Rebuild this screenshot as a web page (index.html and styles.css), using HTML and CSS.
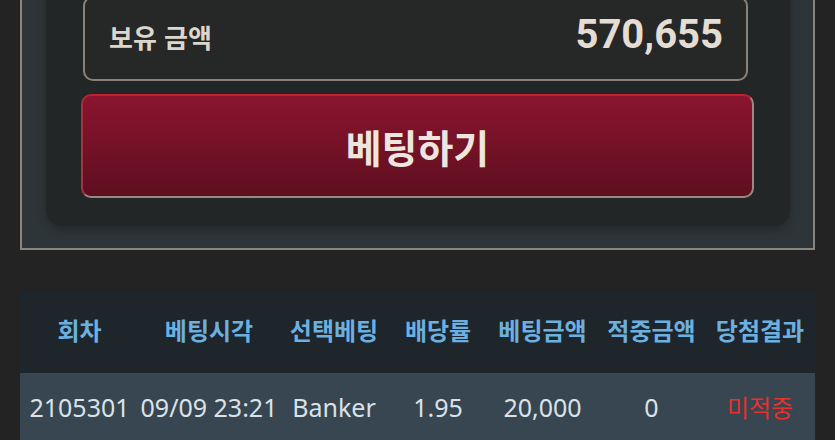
FILE: index.html
```html
<!doctype html>
<html lang="ko">
  <head>
    <meta charset="UTF-8" />
    <meta name="viewport" content="width=device-width, initial-scale=1.0" />
    <title>베팅</title>
    <link rel="stylesheet" href="styles.css">
  </head>
  <body>
    <div class="wrap">
      <div class="bet-panel">
        <div class="bet-card">
          <div class="balance">
            <span class="balance-label">보유 금액</span>
            <span class="balance-value">570,655</span>
          </div>
          <button class="bet-btn">베팅하기</button>
        </div>
      </div>

      <table class="history">
        <colgroup>
          <col class="c-round" />
          <col class="c-time" />
          <col class="c-pick" />
          <col class="c-odds" />
          <col class="c-amount" />
          <col class="c-win" />
          <col class="c-result" />
        </colgroup>
        <thead>
          <tr>
            <th>회차</th>
            <th>베팅시각</th>
            <th>선택베팅</th>
            <th>배당률</th>
            <th>베팅금액</th>
            <th>적중금액</th>
            <th>당첨결과</th>
          </tr>
        </thead>
        <tbody>
          <tr>
            <td>2105301</td>
            <td>09/09 23:21</td>
            <td>Banker</td>
            <td>1.95</td>
            <td>20,000</td>
            <td>0</td>
            <td class="lose">미적중</td>
          </tr>
        </tbody>
      </table>
    </div>
  </body>
</html>
```

FILE: styles.css
```css
body {
  margin: 0;
  background-color: #232323;
  font-family: "Noto Sans", "Noto Sans CJK KR", sans-serif;
  overflow: hidden;
}

.wrap {
  margin-top: -40px;
  padding: 0 20px;
}

.bet-panel {
  background-color: #2e3538;
  border: 2px solid #8a857e;
  padding: 0 23px 22px 24px;
}

.bet-card {
  background-color: #222626;
  border-radius: 0 0 16px 16px;
  box-shadow: 0 4px 10px rgba(0, 0, 0, 0.25);
  padding: 34px 36px 28px 35px;
}

.balance {
  height: 81px;
  margin: 0 6px 0 2px;
  padding: 0 23px 0 24px;
  border: 2px solid #8a8178;
  border-radius: 10px;
  background-color: #262727;
  display: flex;
  justify-content: space-between;
  align-items: center;
}

.balance-label {
  font-family: "Noto Sans CJK KR", sans-serif;
  font-weight: bold;
  font-size: 26px;
  color: #ddd6cc;
  margin-top: -4px;
}

.balance-value {
  font-family: Roboto, "Noto Sans", sans-serif;
  font-weight: bold;
  font-size: 40px;
  color: #e4ddd3;
  margin-top: -8px;
}

.bet-btn {
  display: block;
  width: 100%;
  height: 104px;
  margin-top: 13px;
  border: 2px solid #9c8a82;
  border-top-color: #c0202c;
  border-left-color: #a83040;
  border-radius: 10px;
  background: linear-gradient(to bottom, #8a1430, #5e0f1f);
  font-family: "Noto Sans CJK KR", sans-serif;
  font-weight: bold;
  font-size: 39px;
  color: #ede6de;
}

.history {
  width: 100%;
  margin-top: 42px;
  border-collapse: collapse;
  table-layout: fixed;
}

.c-round { width: 119px; }
.c-time { width: 140px; }
.c-pick { width: 110px; }
.c-odds { width: 98px; }
.c-amount { width: 111px; }
.c-win { width: 107px; }
.c-result { width: 110px; }

.history th {
  height: 75px;
  padding: 0 0 6px;
  background-color: #1e252b;
  color: #6cb0e0;
  font-family: "Noto Sans CJK KR", sans-serif;
  font-weight: bold;
  font-size: 24px;
  white-space: nowrap;
}

.history td {
  height: 67px;
  padding: 0 0 3px;
  background-color: #374650;
  color: #dae2e8;
  font-size: 25px;
  text-align: center;
  white-space: nowrap;
}

.history td.lose {
  color: #e8302c;
  font-family: "Noto Sans CJK KR", sans-serif;
  font-size: 24px;
}
```
